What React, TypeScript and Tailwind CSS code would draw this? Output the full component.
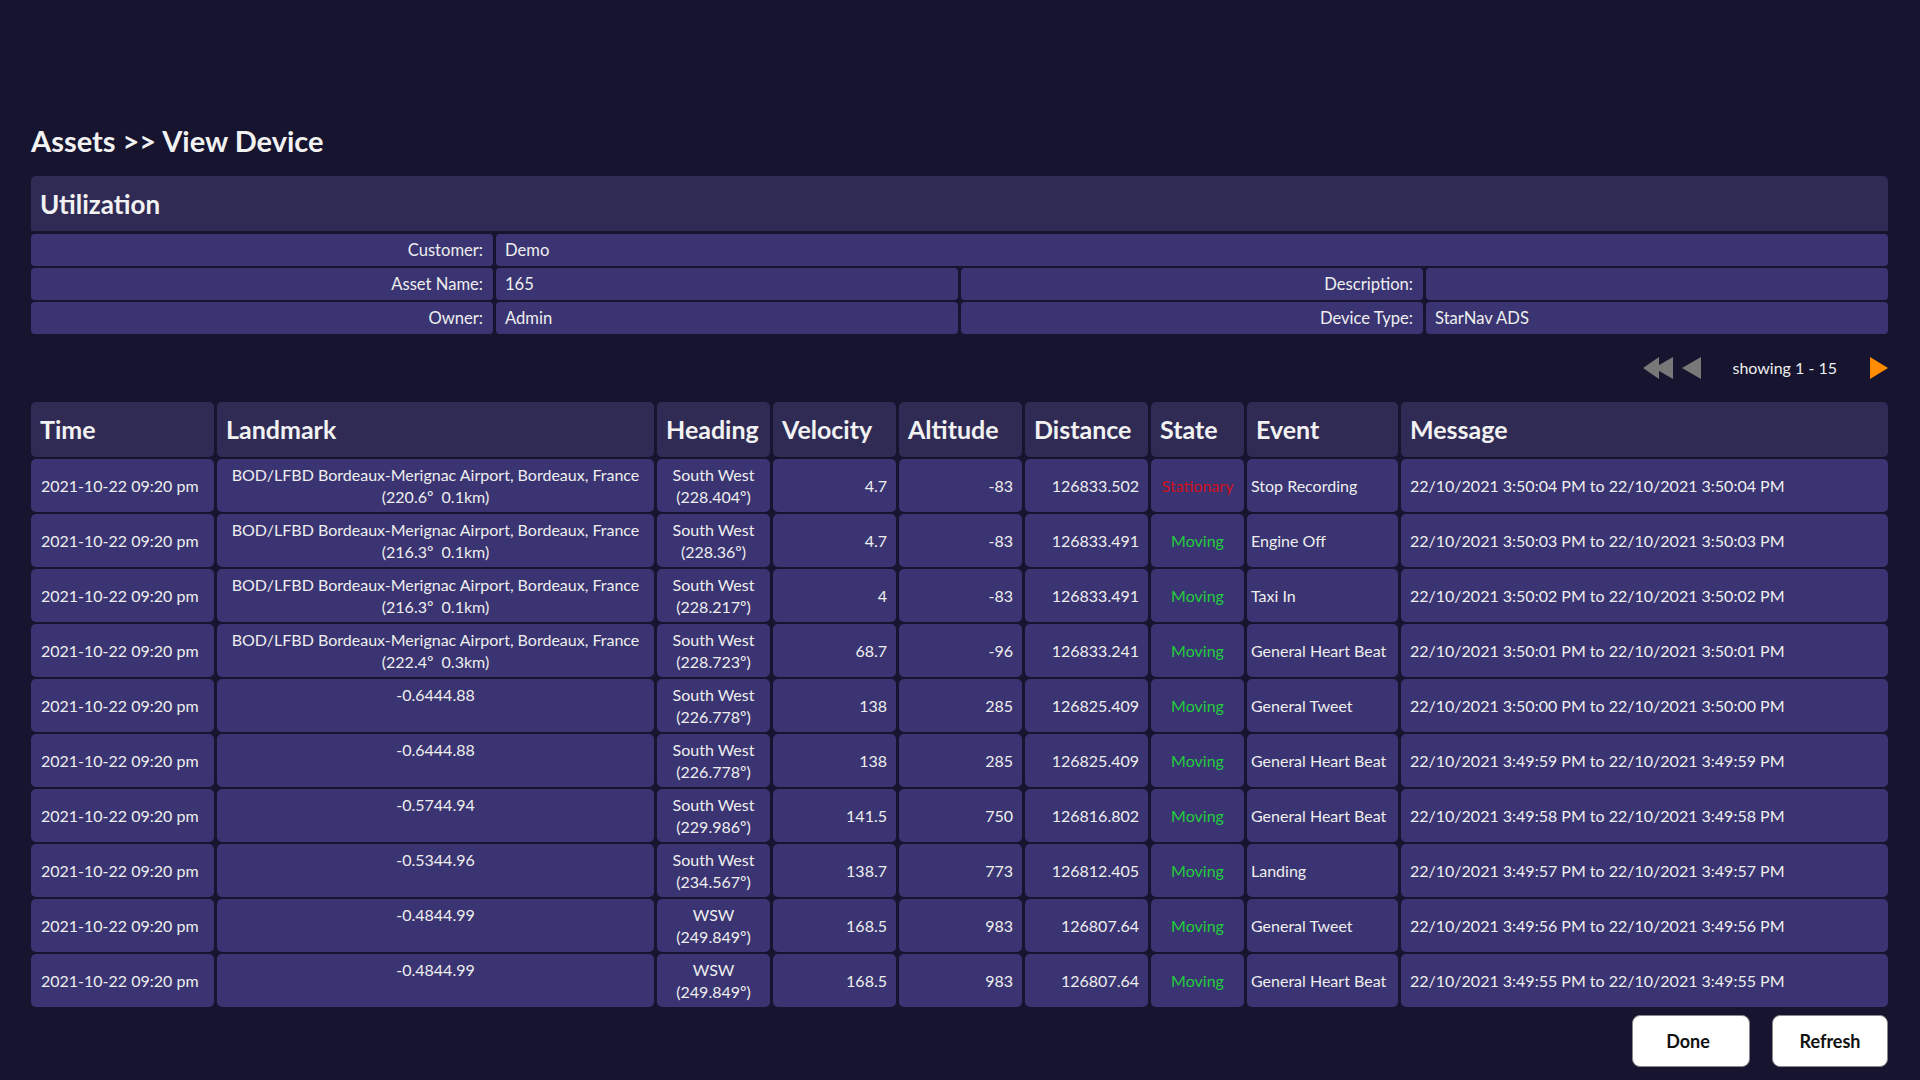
import React from "react";

type Row = {
  lm1: string;
  lm2: string;
  h1: string;
  h2: string;
  vel: string;
  alt: string;
  dist: string;
  state: "Moving" | "Stationary";
  event: string;
  t: string;
};

const airport = "BOD/LFBD Bordeaux-Merignac Airport, Bordeaux, France";

const rows: Row[] = [
  { lm1: airport, lm2: "(220.6º\u00a0 0.1km)", h1: "South West", h2: "(228.404º)", vel: "4.7", alt: "-83", dist: "126833.502", state: "Stationary", event: "Stop Recording", t: "3:50:04" },
  { lm1: airport, lm2: "(216.3º\u00a0 0.1km)", h1: "South West", h2: "(228.36º)", vel: "4.7", alt: "-83", dist: "126833.491", state: "Moving", event: "Engine Off", t: "3:50:03" },
  { lm1: airport, lm2: "(216.3º\u00a0 0.1km)", h1: "South West", h2: "(228.217º)", vel: "4", alt: "-83", dist: "126833.491", state: "Moving", event: "Taxi In", t: "3:50:02" },
  { lm1: airport, lm2: "(222.4º\u00a0 0.3km)", h1: "South West", h2: "(228.723º)", vel: "68.7", alt: "-96", dist: "126833.241", state: "Moving", event: "General Heart Beat", t: "3:50:01" },
  { lm1: "-0.6444.88", lm2: "", h1: "South West", h2: "(226.778º)", vel: "138", alt: "285", dist: "126825.409", state: "Moving", event: "General Tweet", t: "3:50:00" },
  { lm1: "-0.6444.88", lm2: "", h1: "South West", h2: "(226.778º)", vel: "138", alt: "285", dist: "126825.409", state: "Moving", event: "General Heart Beat", t: "3:49:59" },
  { lm1: "-0.5744.94", lm2: "", h1: "South West", h2: "(229.986º)", vel: "141.5", alt: "750", dist: "126816.802", state: "Moving", event: "General Heart Beat", t: "3:49:58" },
  { lm1: "-0.5344.96", lm2: "", h1: "South West", h2: "(234.567º)", vel: "138.7", alt: "773", dist: "126812.405", state: "Moving", event: "Landing", t: "3:49:57" },
  { lm1: "-0.4844.99", lm2: "", h1: "WSW", h2: "(249.849º)", vel: "168.5", alt: "983", dist: "126807.64", state: "Moving", event: "General Tweet", t: "3:49:56" },
  { lm1: "-0.4844.99", lm2: "", h1: "WSW", h2: "(249.849º)", vel: "168.5", alt: "983", dist: "126807.64", state: "Moving", event: "General Heart Beat", t: "3:49:55" },
];

const headers = ["Time", "Landmark", "Heading", "Velocity", "Altitude", "Distance", "State", "Event", "Message"];

const cell = "bg-[#3a3472] rounded-[5px] h-[53px] text-[16px] leading-[22px] text-[#eeeeee]";

function InfoLabel({ children }: { children: React.ReactNode }) {
  return (
    <div className="bg-[#3a3472] rounded-[4px] h-[32px] flex items-center justify-end pr-[10px] text-[16.6px] text-[#eeeeee]">
      {children}
    </div>
  );
}

function InfoValue({ children, span }: { children?: React.ReactNode; span?: boolean }) {
  return (
    <div
      className={
        "bg-[#3a3472] rounded-[4px] h-[32px] flex items-center pl-[9px] text-[16.6px] text-[#eeeeee] " +
        (span ? "col-span-3" : "")
      }
    >
      {children}
    </div>
  );
}

export default function App() {
  return (
    <div
      className="w-[1920px] h-[1080px] bg-[#16142e] text-[#eeeeee] overflow-hidden px-[31px] pt-[122px]"
      style={{ fontFamily: "Lato, 'Open Sans', sans-serif" }}
    >
      <h1 className="text-[29px] font-bold leading-[38px] text-[#f2f2f2]">Assets &gt;&gt; View Device</h1>

      {/* Utilization panel */}
      <div className="mt-[16px] w-[1857px]">
        <div className="bg-[#302b55] rounded-t-[5px] h-[55px] flex items-center pl-[9px] pt-[2px] text-[26px] font-bold text-[#f2f2f2]">
          Utilization
        </div>
        <div className="grid grid-cols-4 gap-x-[3px] gap-y-[2px] mt-[3px]">
          <InfoLabel>Customer:</InfoLabel>
          <InfoValue span>Demo</InfoValue>
          <InfoLabel>Asset Name:</InfoLabel>
          <InfoValue>165</InfoValue>
          <InfoLabel>Description:</InfoLabel>
          <InfoValue />
          <InfoLabel>Owner:</InfoLabel>
          <InfoValue>Admin</InfoValue>
          <InfoLabel>Device Type:</InfoLabel>
          <InfoValue>StarNav ADS</InfoValue>
        </div>
      </div>

      {/* Pagination */}
      <div className="w-[1857px] h-[68px] flex items-center justify-end">
        <svg width="30" height="22" viewBox="0 0 30 22" className="mr-[9px]">
          <polygon points="0,11 16,0 16,22" fill="#787878" />
          <polygon points="11,11 30,0 30,22" fill="#787878" />
        </svg>
        <svg width="19" height="22" viewBox="0 0 19 22">
          <polygon points="0,11 19,0 19,22" fill="#787878" />
        </svg>
        <span className="ml-[31px] text-[16px] text-[#eeeeee]">showing 1 - 15</span>
        <svg width="18" height="22" viewBox="0 0 18 22" className="ml-[33px]">
          <polygon points="0,0 18,11 0,22" fill="#ff8c00" />
        </svg>
      </div>

      {/* Table */}
      <div className="w-[1857px] grid grid-cols-[183px_437px_113px_123px_123px_123px_93px_151px_1fr] gap-x-[3px] gap-y-[2px]">
        {headers.map((h) => (
          <div
            key={h}
            className="bg-[#302b55] rounded-[5px] h-[55px] flex items-center pl-[9px] text-[25px] font-bold text-[#f2f2f2] whitespace-nowrap"
          >
            {h}
          </div>
        ))}
        {rows.map((r, i) => (
          <React.Fragment key={i}>
            <div className={cell + " flex items-center pl-[10px] whitespace-nowrap"}>2021-10-22 09:20 pm</div>
            <div className={cell + " flex flex-col justify-center items-center text-center whitespace-nowrap"}>
              <div>{r.lm1}</div>
              <div>{r.lm2 || "\u00a0"}</div>
            </div>
            <div className={cell + " flex flex-col justify-center items-center text-center whitespace-nowrap"}>
              <div>{r.h1}</div>
              <div>{r.h2}</div>
            </div>
            <div className={cell + " flex items-center justify-end pr-[9px]"}>{r.vel}</div>
            <div className={cell + " flex items-center justify-end pr-[9px]"}>{r.alt}</div>
            <div className={cell + " flex items-center justify-end pr-[9px]"}>{r.dist}</div>
            <div className={cell + " flex items-center justify-center whitespace-nowrap overflow-visible"}>
              <span className={r.state === "Moving" ? "text-[#22cc3c]" : "text-[#d0101c]"}>{r.state}</span>
            </div>
            <div className={cell + " flex items-center pl-[4px] whitespace-nowrap"}>{r.event}</div>
            <div className={cell + " flex items-center pl-[9px] whitespace-nowrap"}>
              22/10/2021 {r.t} PM to 22/10/2021 {r.t} PM
            </div>
          </React.Fragment>
        ))}
      </div>

      {/* Buttons */}
      <div className="w-[1857px] flex justify-end gap-[22px] mt-[8px]">
        <button className="w-[118px] h-[52px] bg-white rounded-[8px] border border-[#888888] text-[#111111] text-[18px] font-bold pr-[6px]">
          Done
        </button>
        <button className="w-[116px] h-[52px] bg-white rounded-[8px] border border-[#888888] text-[#111111] text-[18px] font-bold">
          Refresh
        </button>
      </div>
    </div>
  );
}
